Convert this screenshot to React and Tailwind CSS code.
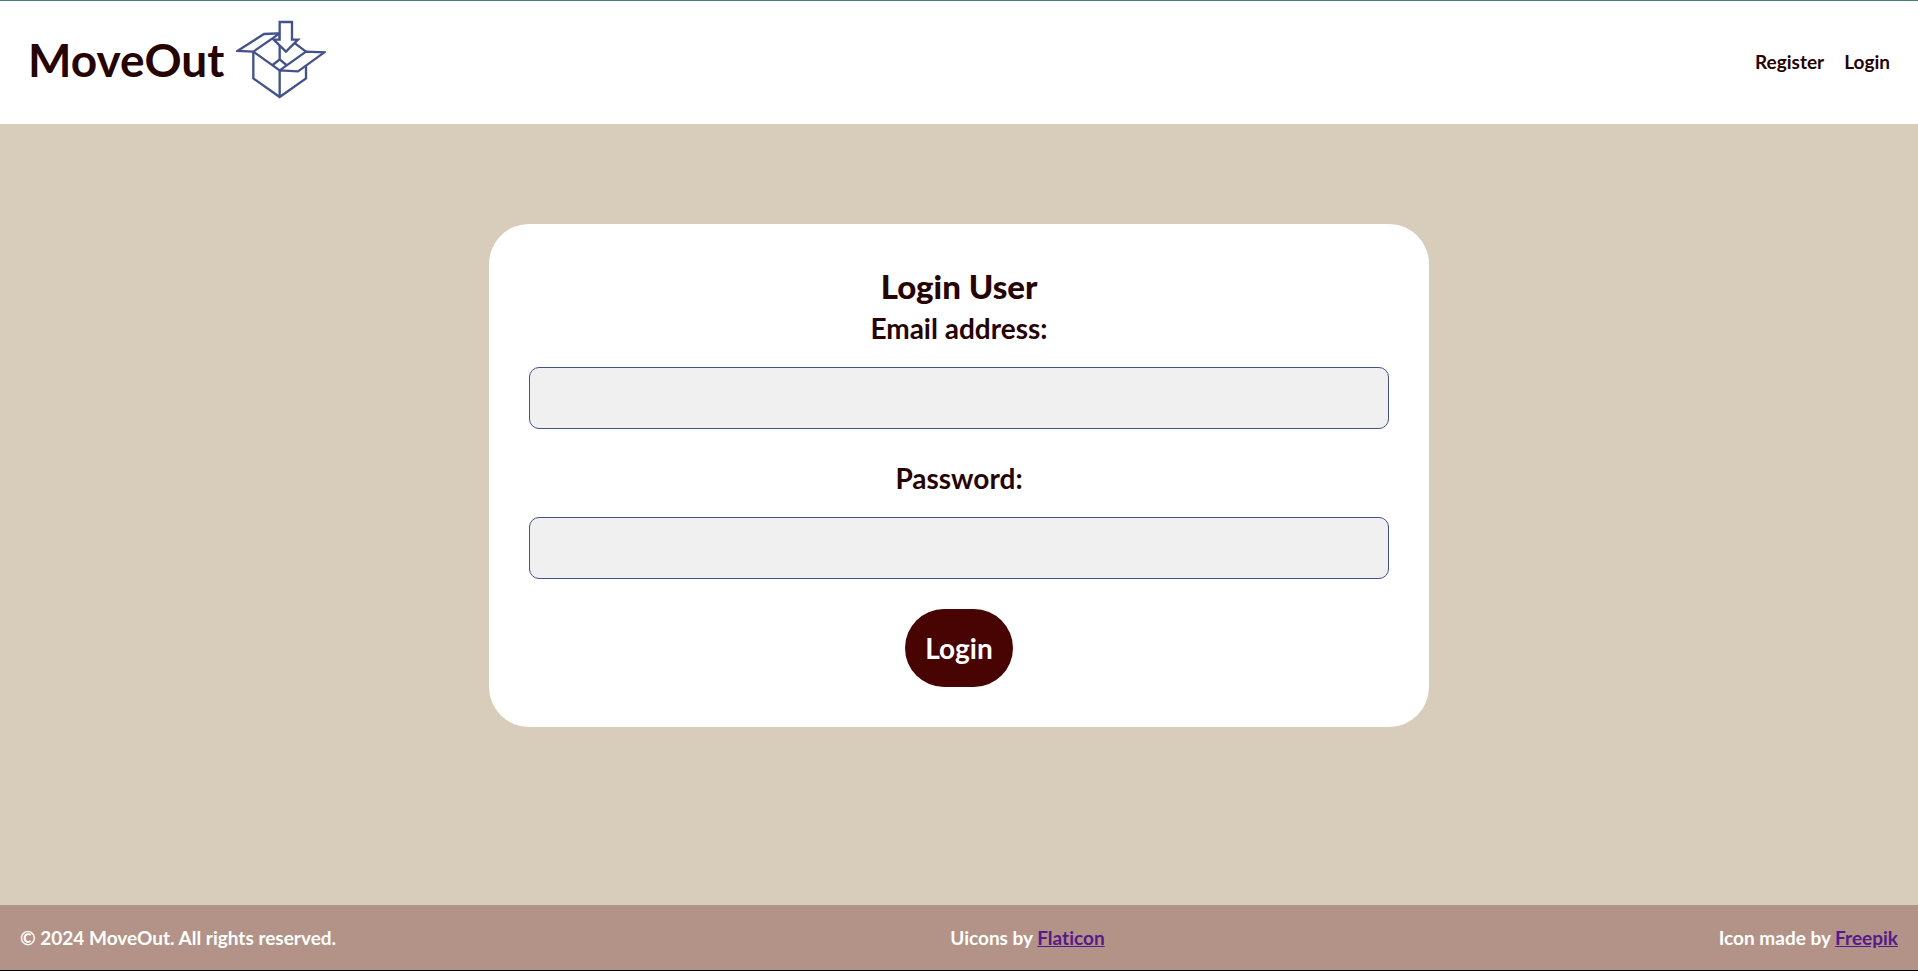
function BoxLogo() {
  return (
    <svg viewBox="36 30 270 240" className="h-20 w-[90px]" fill="none" stroke="#43528a" strokeWidth="7" aria-hidden="true">
      <path d="M88 125V205L167 261L246 205V168" />
      <path d="M167 181V261" />
      <path d="M88 125L167 181L246 125L301 127L222 184L167 181" />
      <path d="M88 125L40 123L120 72L167 70L88 125" />
      <path d="M167 70V148L146 165M167 148L187 165M210 98L246 125" />
      <path d="M167 36H204V89H222L186 125L149 89H167Z" fill="#fff" />
    </svg>
  );
}

function Field({ id, label, type }) {
  return (
    <div className="flex flex-col items-center gap-5">
      <label htmlFor={id} className="text-[28px] leading-[38px]">{label}</label>
      <input id={id} name={id} type={type} className="h-[62px] w-full rounded-[10px] border border-[#43528a] bg-[#f0f0f0] px-4 text-2xl" />
    </div>
  );
}

export default function App() {
  return (
    <div className="flex min-h-screen flex-col border-t border-b border-t-[#408080] border-b-black bg-[#d8cdbb] font-['Lato','Liberation_Sans',sans-serif] font-bold text-[#260404] [font-variant-ligatures:none]">
      <header className="flex items-center justify-between bg-white px-7 pt-[19px] pb-6">
        <a href="#home" className="flex items-center gap-3">
          <span className="text-[46px] leading-none">MoveOut</span>
          <BoxLogo />
        </a>
        <nav className="flex gap-5 pt-1 text-[19px]">
          <a href="#register">Register</a>
          <a href="#login">Login</a>
        </nav>
      </header>
      <main className="flex flex-1 flex-col items-center py-[100px]">
        <form className="flex w-[49%] flex-col items-center rounded-[40px] bg-white p-10" onSubmit={(e) => e.preventDefault()}>
          <h1 className="text-[33px] leading-[45px] font-black">Login User</h1>
          <div className="flex w-full flex-col gap-[30px]">
            <Field id="email" label="Email address:" type="email" />
            <Field id="password" label="Password:" type="password" />
          </div>
          <button type="submit" className="mt-[30px] rounded-[40px] bg-[#480303] px-5 py-[18px] text-[28px] leading-[42px] text-white">Login</button>
        </form>
      </main>
      <footer className="flex items-center justify-between bg-[#b39387] px-5 py-5 text-[19px] leading-[25px] text-white">
        <p>© 2024 MoveOut. All rights reserved.</p>
        <p>Uicons by <a href="#flaticon" className="text-[#551a8b] underline">Flaticon</a></p>
        <p>Icon made by <a href="#freepik" className="text-[#551a8b] underline">Freepik</a></p>
      </footer>
    </div>
  );
}
